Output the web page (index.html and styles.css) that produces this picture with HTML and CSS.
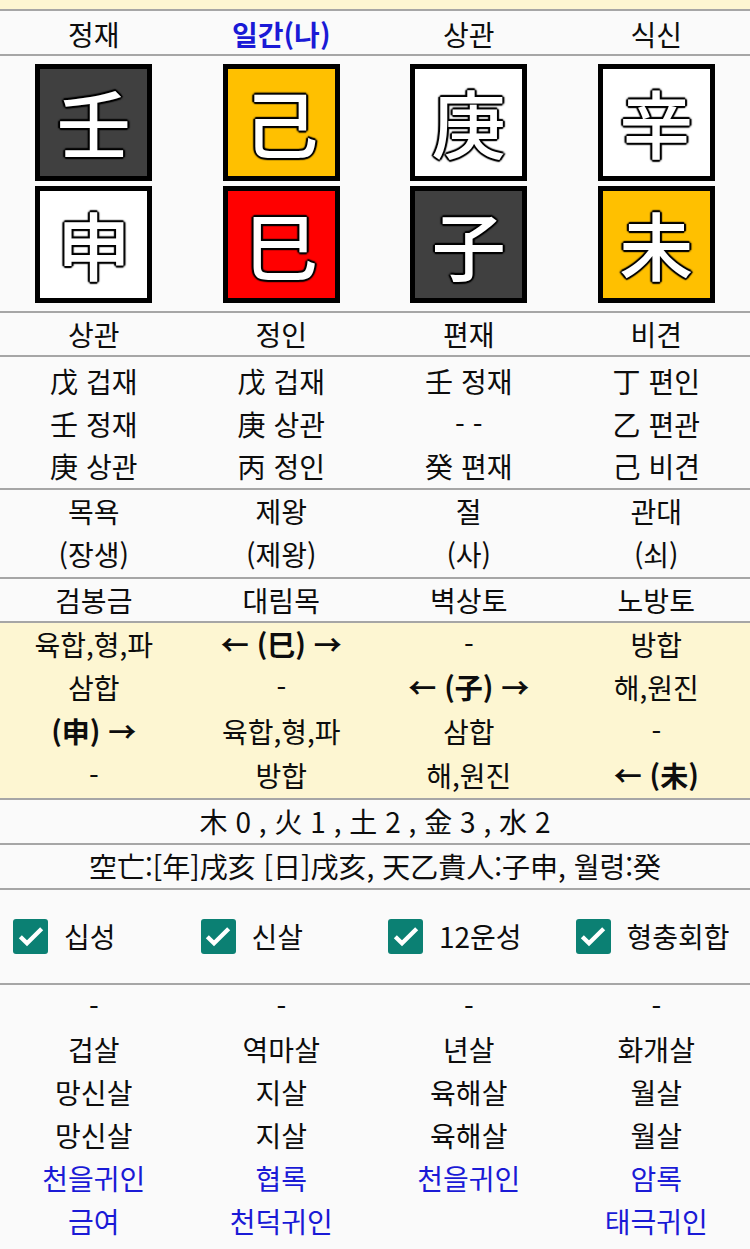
FILE: index.html
```html
<!DOCTYPE html>
<html lang="ko">
<head>
    <meta charset="UTF-8">
    <title>사주 명식</title>
    <link rel="stylesheet" href="styles.css">
</head>
<body>

<div class="band"></div>

<!-- 천간 십성 -->
<div class="row head">
    <div>정재</div>
    <div class="me">일간(나)</div>
    <div>상관</div>
    <div>식신</div>
</div>

<!-- 천간 / 지지 -->
<div class="row tiles">
    <div class="pillar">
        <span class="tile dark">壬</span>
        <span class="tile white">申</span>
    </div>
    <div class="pillar">
        <span class="tile yellow">己</span>
        <span class="tile red">巳</span>
    </div>
    <div class="pillar">
        <span class="tile white">庚</span>
        <span class="tile dark">子</span>
    </div>
    <div class="pillar">
        <span class="tile white">辛</span>
        <span class="tile yellow">未</span>
    </div>
</div>

<!-- 지지 십성 -->
<div class="row single">
    <div>상관</div>
    <div>정인</div>
    <div>편재</div>
    <div>비견</div>
</div>

<!-- 지장간 -->
<div class="row hidden">
    <div>戊 겁재<br>壬 정재<br>庚 상관</div>
    <div>戊 겁재<br>庚 상관<br>丙 정인</div>
    <div>壬 정재<br>- -<br>癸 편재</div>
    <div>丁 편인<br>乙 편관<br>己 비견</div>
</div>

<!-- 12운성 -->
<div class="row stages">
    <div>목욕<br>(장생)</div>
    <div>제왕<br>(제왕)</div>
    <div>절<br>(사)</div>
    <div>관대<br>(쇠)</div>
</div>

<!-- 납음 -->
<div class="row single">
    <div>검봉금</div>
    <div>대림목</div>
    <div>벽상토</div>
    <div>노방토</div>
</div>

<!-- 형충회합 -->
<div class="row relations">
    <div>육합,형,파<br>삼합<br><b>(申) →</b><br>-</div>
    <div><b>← (巳) →</b><br>-<br>육합,형,파<br>방합</div>
    <div>-<br><b>← (子) →</b><br>삼합<br>해,원진</div>
    <div>방합<br>해,원진<br>-<br><b>← (未)</b></div>
</div>

<div class="line">木 0 , 火 1 , 土 2 , 金 3 , 水 2</div>
<div class="line">空亡:[年]戌亥 [日]戌亥, 天乙貴人:子申, 월령:癸</div>

<!-- 표시 옵션 -->
<div class="row options">
    <label class="option"><span class="box"><svg viewBox="0 0 24 24"><path d="M4 12.5l5 5L20 6.5"/></svg></span>십성</label>
    <label class="option"><span class="box"><svg viewBox="0 0 24 24"><path d="M4 12.5l5 5L20 6.5"/></svg></span>신살</label>
    <label class="option"><span class="box"><svg viewBox="0 0 24 24"><path d="M4 12.5l5 5L20 6.5"/></svg></span>12운성</label>
    <label class="option"><span class="box"><svg viewBox="0 0 24 24"><path d="M4 12.5l5 5L20 6.5"/></svg></span>형충회합</label>
</div>

<!-- 신살 -->
<div class="row shinsal">
    <div>-<br>겁살<br>망신살<br>망신살<br><span class="good">천을귀인</span><br><span class="good">금여</span></div>
    <div>-<br>역마살<br>지살<br>지살<br><span class="good">협록</span><br><span class="good">천덕귀인</span></div>
    <div>-<br>년살<br>육해살<br>육해살<br><span class="good">천을귀인</span></div>
    <div>-<br>화개살<br>월살<br>월살<br><span class="good">암록</span><br><span class="good">태극귀인</span></div>
</div>

</body>
</html>
```

FILE: styles.css
```css
body {
    margin: 0;
    background: #fafafa;
    font-family: "Noto Sans CJK KR", "Noto Sans", sans-serif;
    font-size: 28px;
    color: #0d0d0d;
}

.band {
    height: 9px;
    background: #fdf6d2;
}

.row {
    display: grid;
    grid-template-columns: repeat(4, 1fr);
    text-align: center;
    border-top: 2px solid #a6a6a6;
}

.head {
    line-height: 40px;
    padding-top: 3px;
}

.head .me {
    color: #1a1ad6;
    font-weight: bold;
}

/* 간지 타일 */
.tiles {
    padding: 8px 0;
}

.pillar {
    display: flex;
    flex-direction: column;
    align-items: center;
    gap: 5px;
}

.tile {
    box-sizing: border-box;
    width: 117px;
    height: 117px;
    border: 5px solid #000;
    font-size: 74px;
    font-weight: 500;
    line-height: 104px;
    color: #fff;
    text-shadow: -2px 0 1px #000, 2px 0 1px #000, 0 -2px 1px #000, 0 2px 1px #000,
        -1px -1px 2px #000, 1px 1px 2px #000, -1px 1px 2px #000, 1px -1px 2px #000;
}

.tile.dark { background: #404040; }
.tile.yellow { background: #ffc000; }
.tile.red { background: #ff0000; }
.tile.white { background: #fff; }

.single {
    line-height: 42px;
}

.hidden {
    line-height: 42.5px;
    padding-top: 3px;
}

.stages {
    line-height: 43.5px;
}

.relations {
    background: #fdf6d2;
    line-height: 43.75px;
}

.line {
    text-align: center;
    line-height: 43px;
    border-top: 2px solid #a6a6a6;
}

/* 체크박스 */
.options {
    height: 93px;
    align-items: center;
    text-align: left;
}

.option {
    display: flex;
    align-items: center;
    gap: 16px;
    padding-left: 13px;
}

.box {
    width: 35px;
    height: 35px;
    border-radius: 3px;
    background: #0b8073;
    display: flex;
    align-items: center;
    justify-content: center;
}

.box svg {
    width: 32px;
    height: 32px;
    fill: none;
    stroke: #fff;
    stroke-width: 3.2;
}

.shinsal {
    line-height: 43px;
}

.good {
    color: #1a1ad6;
}
```
